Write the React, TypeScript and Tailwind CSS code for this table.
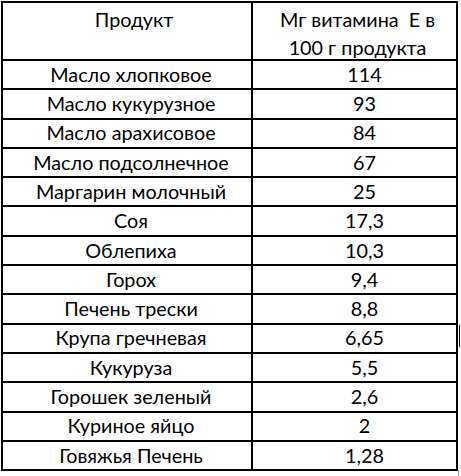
const rows: [string, string][] = [
  ["Масло хлопковое", "114"],
  ["Масло кукурузное", "93"],
  ["Масло арахисовое", "84"],
  ["Масло подсолнечное", "67"],
  ["Маргарин молочный", "25"],
  ["Соя", "17,3"],
  ["Облепиха", "10,3"],
  ["Горох", "9,4"],
  ["Печень трески", "8,8"],
  ["Крупа гречневая", "6,65"],
  ["Кукуруза", "5,5"],
  ["Горошек зеленый", "2,6"],
  ["Куриное яйцо", "2"],
  ["Говяжья Печень", "1,28"],
];

export default function App() {
  return (
    <div className="relative w-[461px] h-[476px] bg-white overflow-hidden text-black font-['Lato','Liberation_Sans',sans-serif] text-[19.8px]">
      <div className="ml-px mt-px w-[457px] border-2 border-black grid grid-cols-[250px_1fr]">
        <div className="h-[58px] border-b-2 border-r-2 border-black flex justify-center pt-[2px] pl-[14px] leading-[28px]">
          Продукт
        </div>
        <div className="h-[58px] border-b-2 border-black flex flex-col items-center pt-[2px] pl-[6px] leading-[28px]">
          <span>Мг витамина&nbsp; Е в</span>
          <span>100 г продукта</span>
        </div>
        {rows.map(([name, value], i) => (
          <Row key={name} name={name} value={value} last={i === rows.length - 1} />
        ))}
      </div>
      <div className="absolute left-[459px] top-[325px] w-px h-[22px] bg-black" />
      <div className="absolute left-[458px] top-[470px] w-px h-[6px] bg-[#9a9a9a]" />
    </div>
  );
}

function Row({ name, value, last }: { name: string; value: string; last: boolean }) {
  return (
    <>
      <div
        className={`${last ? "h-[27.5px]" : "h-[29.3px] border-b-2"} border-r-2 border-black flex items-center justify-center pl-[8px] leading-none`}
      >
        {name}
      </div>
      <div
        className={`${last ? "h-[27.5px]" : "h-[29.3px] border-b-2"} border-black flex items-center justify-center pl-[20px] leading-none`}
      >
        {value}
      </div>
    </>
  );
}
